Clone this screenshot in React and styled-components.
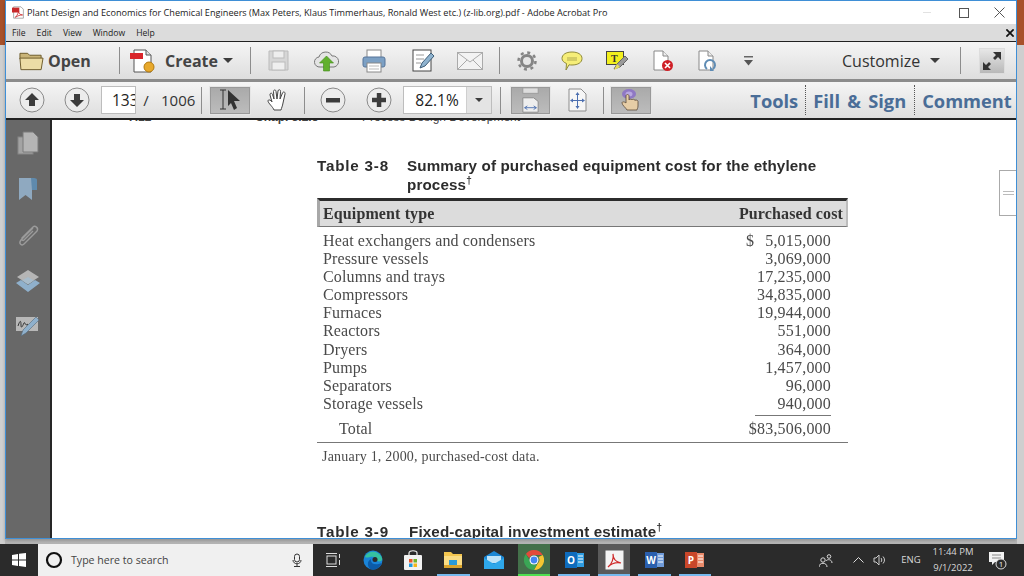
import React from 'react';
import styled, { createGlobalStyle } from 'styled-components';

const Global = createGlobalStyle`
  html, body { margin: 0; padding: 0; width: 1024px; height: 576px; overflow: hidden; }
  body { font-family: "Open Sans", "Noto Sans", sans-serif; background: #c4c4c4; }
  svg { flex: none; display: block; }
`;

const Screen = styled.div`
  width: 1024px;
  height: 576px;
  display: flex;
  flex-direction: column;
  overflow: hidden;
`;
const Desktop = styled.div`
  height: 544px;
  display: flex;
  background: linear-gradient(#c9c9c9 538px, #b4b4b4 544px);
`;
const Strip = styled.div`
  width: ${(p) => p.$w}px;
  flex: none;
  background: linear-gradient(#a8512a 0 45px, #cfcfcf 45px 100%);
`;
const Window = styled.div`
  width: 1012px;
  height: 539px;
  flex: none;
  display: flex;
  flex-direction: column;
  border: 1px solid #3f8fd6;
  box-sizing: border-box;
  background: #fff;
  box-shadow: 1px 0 0 #3f8fd6, 0 2px 3px rgba(0, 0, 0, 0.25);
`;
const TitleBar = styled.div`
  height: 23px;
  flex: none;
  display: flex;
  align-items: center;
  padding-left: 6px;
  background: #fff;
  font-size: 9.13px;
  color: #222;
`;
const TitleText = styled.span`
  margin-left: 2px;
  white-space: nowrap;
`;
const WinButtons = styled.div`
  margin-left: auto;
  display: flex;
  align-items: center;
`;
const WinButton = styled.div`
  width: ${(p) => p.$w}px;
  height: 22px;
  display: flex;
  align-items: center;
  justify-content: center;
`;
const MinimizeDash = styled.div`
  width: 8px;
  height: 1px;
  background: #e2e2e2;
`;
const MenuBar = styled.div`
  height: 17px;
  flex: none;
  display: flex;
  align-items: center;
  gap: 11px;
  padding: 0 2px 0 6px;
  background: #dcdcdc;
  border-bottom: 1px solid #222;
  font-size: 8.6px;
  color: #222;
`;
const MenuClose = styled.div`
  margin-left: auto;
  display: flex;
`;
const Toolbar = styled.div`
  height: ${(p) => p.$h}px;
  flex: none;
  display: flex;
  align-items: center;
  box-sizing: border-box;
  background: linear-gradient(#f5f5f5, #dedede);
  border-bottom: ${(p) => p.$line};
`;
const Slot = styled.div`
  width: ${(p) => p.$w}px;
  flex: none;
  height: 100%;
  display: flex;
  align-items: center;
  justify-content: ${(p) => p.$j || 'center'};
  gap: ${(p) => p.$gap || 0}px;
`;
const Sep = styled.div`
  width: 1px;
  height: ${(p) => p.$h || 27}px;
  flex: none;
  background: ${(p) => p.$c || '#8d8d8d'};
`;
const BigLabel = styled.span`
  font-size: 16px;
  font-weight: 700;
  color: #444;
`;
const PlainLabel = styled.span`
  font-size: ${(p) => p.$size || 16}px;
  color: #333;
`;
const Caret = styled.div`
  width: 0;
  height: 0;
  flex: none;
  border-left: ${(p) => p.$s || 5}px solid transparent;
  border-right: ${(p) => p.$s || 5}px solid transparent;
  border-top: ${(p) => p.$s || 5}px solid #3c3c3c;
`;
const PageInput = styled.div`
  width: ${(p) => p.$w}px;
  height: 28px;
  flex: none;
  box-sizing: border-box;
  border: 1px solid #bdbdbd;
  background: #fff;
  display: flex;
  align-items: center;
  overflow: hidden;
  font-size: 15.5px;
  color: #222;
  padding-left: ${(p) => p.$pad}px;
`;
const ZoomCaret = styled.div`
  margin-left: auto;
  width: 24px;
  height: 100%;
  flex: none;
  background: #e4e4e4;
  border-left: 1px solid #cfcfcf;
  display: flex;
  align-items: center;
  justify-content: center;
`;
const Pressed = styled.div`
  width: ${(p) => p.$w}px;
  height: 29px;
  flex: none;
  box-sizing: border-box;
  background: linear-gradient(#a9a9a9, #bdbdbd);
  border: 1px solid #e6e6e6;
  box-shadow: inset 0 0 0 1px #999;
  display: flex;
  align-items: center;
  justify-content: center;
`;
const PaneLink = styled.span`
  font-size: 18.3px;
  font-weight: 700;
  word-spacing: 2.5px;
  color: #4a6d97;
  white-space: nowrap;
`;
const DotSep = styled.div`
  height: 30px;
  width: 0;
  flex: none;
  border-left: 1px dotted #555;
`;
const Body = styled.div`
  flex: 1;
  min-height: 0;
  display: flex;
`;
const SidePanel = styled.div`
  width: 44px;
  flex: none;
  background: #686868;
  border-right: 2px solid #262626;
  box-shadow: 1px 0 0 #555;
  display: flex;
  flex-direction: column;
  align-items: center;
  padding-top: 11px;
  gap: 22px;
`;
const DocView = styled.div`
  flex: 1;
  position: relative;
  overflow: hidden;
  background: #fff;
`;
const ScrollHandle = styled.div`
  position: absolute;
  right: 0;
  top: 50px;
  width: 17px;
  height: 46px;
  box-sizing: border-box;
  border: 1px solid #aaa;
  border-right: none;
  background: #fff;
  display: flex;
  align-items: center;
  justify-content: center;
  &::after {
    content: '';
    width: 11px;
    height: 2px;
    border-top: 1px solid #bbb;
    border-bottom: 1px solid #bbb;
  }
`;
const ClippedHead = styled.div`
  margin-top: -10px;
  height: 18px;
  display: flex;
  font-family: "Liberation Sans", sans-serif;
  font-size: 12px;
  font-weight: 700;
  color: #444;
  white-space: nowrap;
`;
const HeadPart = styled.span`
  width: ${(p) => p.$w}px;
  flex: none;
  font-weight: ${(p) => p.$weight || 700};
  padding-left: ${(p) => p.$pad || 0}px;
  box-sizing: border-box;
`;
const Sheet = styled.div`
  width: 531px;
  margin-left: 265px;
  padding-top: 28px;
  filter: blur(0.3px);
`;
const Caption = styled.div`
  display: grid;
  grid-template-columns: 90px 1fr;
  font-family: "Liberation Sans", sans-serif;
  font-weight: 700;
  font-size: 15.2px;
  line-height: 19px;
  letter-spacing: 0.13px;
  color: #2c2c2c;
  white-space: nowrap;
`;
const TableNo = styled.span`
  letter-spacing: 0.8px;
`;
const Sup = styled.sup`
  font-size: 10px;
  line-height: 0;
`;
const HeadBand = styled.div`
  margin-top: 4px;
  height: 29px;
  box-sizing: border-box;
  border-top: 3px solid #2c2c2c;
  border-bottom: 1px solid #777;
  border-left: 3px solid #a8a8a8;
  border-right: 2px solid #bdbdbd;
  background: #dcdcdc;
  display: flex;
  align-items: center;
  justify-content: space-between;
  padding: 0 3px;
  font-family: "Liberation Serif", serif;
  font-weight: 700;
  font-size: 16px;
  letter-spacing: 0.12px;
  color: #333;
`;
const Rows = styled.div`
  margin-top: 5px;
  font-family: "Liberation Serif", serif;
  font-size: 16px;
  letter-spacing: 0.13px;
  color: #4a4a4a;
`;
const Row = styled.div`
  height: 18.1px;
  line-height: 18.1px;
  display: flex;
  padding: 0 17px 0 6px;
  white-space: nowrap;
`;
const Amount = styled.span`
  margin-left: auto;
  letter-spacing: 0.2px;
`;
const Dollar = styled.span`
  margin-right: 11px;
`;
const TotalRule = styled.div`
  width: 76px;
  height: 1px;
  margin: 2px 17px 0 auto;
  background: #777;
`;
const TotalRow = styled.div`
  height: 26px;
  box-sizing: border-box;
  line-height: 24px;
  display: flex;
  padding: 0 17px 0 22px;
  border-bottom: 1px solid #777;
  margin-top: 1px;
`;
const Footnote = styled.div`
  margin-top: 6px;
  padding-left: 5px;
  font-family: "Liberation Serif", serif;
  font-size: 14px;
  letter-spacing: 0.2px;
  color: #4a4a4a;
`;
const NextCaption = styled(Caption)`
  margin-top: 57px;
  grid-template-columns: 92px 1fr;
`;
const Taskbar = styled.div`
  height: 32px;
  flex: none;
  display: flex;
  align-items: stretch;
  background: #2b2b2b;
  color: #ddd;
`;
const StartBtn = styled.div`
  width: 38px;
  flex: none;
  display: flex;
  align-items: center;
  justify-content: center;
`;
const SearchBox = styled.div`
  width: 275px;
  flex: none;
  display: flex;
  align-items: center;
  background: #f0f0f0;
  color: #444;
  font-size: 10.6px;
  padding: 0 11px 0 7px;
  box-sizing: border-box;
`;
const SearchText = styled.span`
  margin-left: 8px;
`;
const MicWrap = styled.div`
  margin-left: auto;
  display: flex;
`;
const TaskIcon = styled.div`
  width: ${(p) => p.$w || 40.2}px;
  flex: none;
  display: flex;
  align-items: center;
  justify-content: center;
  box-sizing: border-box;
  position: relative;
  padding: 0 4px;
  background: ${(p) => p.$bg || 'transparent'} content-box;
  &::after {
    content: '';
    position: absolute;
    left: 4px;
    right: 4px;
    bottom: 0;
    height: 2px;
    background: ${(p) => p.$line || 'transparent'};
  }
`;
const Tray = styled.div`
  margin-left: auto;
  margin-right: 5px;
  display: flex;
  align-items: center;
  font-size: 9.5px;
  color: #d8d8d8;
`;
const TraySlot = styled.div`
  width: ${(p) => p.$w}px;
  flex: none;
  display: flex;
  align-items: center;
  justify-content: center;
  text-align: center;
  line-height: 16px;
`;

const Folder = () => (
  <svg width="25" height="22" viewBox="0 0 26 22">
    <path d="M1 3h8l2 2h12v4H1z" fill="#c9b478" stroke="#6b5a2a" />
    <path d="M2 20L1 8h24l-2 12z" fill="#ecdca6" stroke="#6b5a2a" />
  </svg>
);
const CreateIcon = () => (
  <svg width="26" height="24" viewBox="0 0 26 24">
    <path d="M4 1h12l5 5v17H4z" fill="#fff" stroke="#555" />
    <path d="M16 1v5h5" fill="#ddd" stroke="#555" />
    <rect x="0" y="4" width="13" height="6" fill="#d9252a" />
    <circle cx="19" cy="18" r="5" fill="#e8a92c" stroke="#b27a10" />
  </svg>
);
const SaveIcon = () => (
  <svg width="21" height="21" viewBox="0 0 21 21">
    <path d="M1 1h19v19H1z" fill="#d6d6d6" stroke="#bbb" />
    <rect x="5" y="1" width="11" height="7" fill="#eee" stroke="#bbb" />
    <rect x="4" y="12" width="13" height="8" fill="#efefef" stroke="#bbb" />
  </svg>
);
const UploadIcon = () => (
  <svg width="27" height="22" viewBox="0 0 27 22">
    <path d="M7 17a5 5 0 0 1-1-10 7 7 0 0 1 13-1 5.500 5.500 0 0 1 2 11z" fill="#e4e4e4" stroke="#777" />
    <path d="M13.500 6l7 7h-4v8h-6v-8h-4z" fill="#62b02e" stroke="#3f8a1a" strokeWidth=".6" />
  </svg>
);
const PrintIcon = () => (
  <svg width="24" height="24" viewBox="0 0 24 24">
    <rect x="5" y="1" width="14" height="8" fill="#fff" stroke="#888" />
    <rect x="1" y="8" width="22" height="10" rx="2" fill="#7ca0c4" stroke="#56759a" />
    <rect x="5" y="14" width="14" height="9" fill="#fff" stroke="#888" />
    <path d="M7 17h10M7 20h10" stroke="#bbb" />
  </svg>
);
const EditIcon = () => (
  <svg width="24" height="23" viewBox="0 0 24 23">
    <rect x="1" y="1" width="18" height="21" fill="#fff" stroke="#444" />
    <path d="M4 6h8M4 10h8M4 14h5" stroke="#999" />
    <path d="M8 19l2-5 9-10 3 3-9 10z" fill="#8fb3cf" stroke="#3f5e78" />
  </svg>
);
const MailIcon = () => (
  <svg width="26" height="18" viewBox="0 0 26 18">
    <rect x=".5" y=".5" width="25" height="17" fill="#f3f3f3" stroke="#aaa" />
    <path d="M1 1l12 9 12-9M1 17l9-9M25 17l-9-9" fill="none" stroke="#aaa" />
  </svg>
);
const GearIcon = () => (
  <svg width="20" height="20" viewBox="0 0 20 20">
    <circle cx="10" cy="10" r="5.500" fill="#e6e6e6" stroke="#858585" strokeWidth="3" />
    <circle cx="10" cy="10" r="8.500" fill="none" stroke="#858585" strokeWidth="2.500" strokeDasharray="3 3.670" />
  </svg>
);
const CommentIcon = () => (
  <svg width="22" height="20" viewBox="0 0 22 20">
    <path d="M11 1c6 0 10 2.500 10 6.500S17 14 11 14c-1 0-2 0-3-.2L5 19l.5-6.500C3 11.500 1 9.800 1 7.500 1 3.500 5 1 11 1z" fill="#f6ee78" stroke="#8f8a3a" />
    <path d="M6 7h10M6 9h10" stroke="#b0aa50" />
  </svg>
);
const HighlightIcon = () => (
  <svg width="23" height="20" viewBox="0 0 23 20">
    <rect x=".5" y=".5" width="17" height="13" fill="#f2ef1e" stroke="#444" />
    <text x="5" y="11" fontSize="10" fontFamily="Liberation Serif" fontWeight="700" fill="#333">T</text>
    <path d="M8 18l3-5 8-8 3 3-8 8z" fill="#9a9a9a" stroke="#666" />
    <path d="M8 19l3-6 3 3z" fill="#e8dd5a" />
  </svg>
);
const PageX = () => (
  <svg width="21" height="22" viewBox="0 0 21 22">
    <path d="M1 1h9l5 5v14H1z" fill="#fff" stroke="#888" />
    <path d="M10 1v5h5" fill="#eee" stroke="#888" />
    <circle cx="14.500" cy="15.500" r="5.500" fill="#cf2027" />
    <path d="M12 13l5 5M17 13l-5 5" stroke="#fff" strokeWidth="1.600" />
  </svg>
);
const PageRefresh = () => (
  <svg width="19" height="22" viewBox="0 0 19 22">
    <path d="M1 1h9l5 5v14H1z" fill="#fff" stroke="#888" />
    <path d="M10 1v5h5" fill="#eee" stroke="#888" />
    <path d="M9 19a5 5 0 1 1 6 0" fill="none" stroke="#5f8cb4" strokeWidth="2" />
    <path d="M12 16v5h4z" fill="#5f8cb4" />
  </svg>
);
const MoreIcon = () => (
  <svg width="9" height="10" viewBox="0 0 9 10">
    <path d="M0 0h9v1.500H0z" fill="#666" />
    <path d="M0 4h9L4.500 9.500z" fill="#555" />
  </svg>
);
const ExpandBtn = () => (
  <svg width="26" height="26" viewBox="0 0 26 26">
    <defs>
      <linearGradient id="exp" x1="0" y1="0" x2="0" y2="1">
        <stop offset="0" stopColor="#e8e8e8" />
        <stop offset="1" stopColor="#b8b8b8" />
      </linearGradient>
    </defs>
    <rect x=".5" y=".5" width="25" height="25" fill="url(#exp)" stroke="#ddd" />
    <path d="M14 4h8v8l-3-3-3 3-2-2 3-3zM12 22H4v-8l3 3 3-3 2 2-3 3z" fill="#333" />
  </svg>
);
const RoundBtn = ({ kind }) => (
  <svg width="26" height="26" viewBox="0 0 26 26">
    <circle cx="13" cy="13" r="12" fill="#ececec" stroke="#8a8a8a" />
    {kind === 'up' && <path d="M13 6l7 7h-4v6h-6v-6H6z" fill="#3c3c3c" />}
    {kind === 'down' && <path d="M13 20l7-7h-4V7h-6v6H6z" fill="#3c3c3c" />}
    {kind === 'minus' && <rect x="6" y="11" width="14" height="4.500" fill="#3c3c3c" />}
    {kind === 'plus' && <path d="M10.800 6h4.500v4.800H20v4.500h-4.700V20h-4.500v-4.700H6v-4.500h4.800z" fill="#3c3c3c" />}
  </svg>
);
const SelectIcon = () => (
  <svg width="24" height="22" viewBox="0 0 24 22">
    <path d="M2 1h6M2 20h6M5 1v19" stroke="#333" fill="none" />
    <path d="M10 1l12 11h-6l3 7-3 2-3-7-3 3z" fill="#333" />
  </svg>
);
const HandIcon = () => (
  <svg width="22" height="24" viewBox="0 0 22 24">
    <path d="M7 22c-1-3-6-7-6-9s3-1 4 1L3 7c-.5-2 2-2.500 2.500-.5L7 11 6.500 3.500c0-2 2.500-2 2.500 0L10 11l1-8c.3-2 2.800-1.500 2.500.5L13 11l2.500-6c.8-1.800 3-1 2.500 1l-2 9c-.5 3-1.500 5-2 7z" fill="#fff" stroke="#444" />
  </svg>
);
const FitWidth = () => (
  <svg width="19" height="27" viewBox="0 0 19 30">
    <rect x="1" y="1" width="17" height="6" fill="#ddd" stroke="#999" />
    <path d="M1 12h12l5 4v12H1z" fill="#eee" stroke="#888" />
    <path d="M3 23h13M3 23l3-2M3 23l3 2M16 23l-3-2M16 23l-3 2" stroke="#4c6fb0" />
  </svg>
);
const FitPage = () => (
  <svg width="19" height="24" viewBox="0 0 19 24">
    <path d="M1 1h12l5 5v17H1z" fill="#f6f6f6" stroke="#8d8d8d" />
    <path d="M9.500 6v13M4 12.500h11" stroke="#4c6fb0" />
    <path d="M9.500 4l2 3h-4zM9.500 21l2-3h-4zM2 12.500l3-2v4zM17 12.500l-3-2v4z" fill="#4c6fb0" />
  </svg>
);
const TouchIcon = () => (
  <svg width="22" height="24" viewBox="0 0 22 24">
    <ellipse cx="9" cy="6" rx="7" ry="5" fill="#8f78c4" />
    <ellipse cx="9" cy="6" rx="3.500" ry="2.500" fill="#b8a8e0" />
    <path d="M7 22c-1-2-5-5-5-7s3-1 4 0V8c0-2 3-2 3 0v4c0-1 3-1 3 0 0-1 3-1 3 .5 0-1 3-.5 3 1V18c0 2-1 3-1 4z" fill="#e6cda6" stroke="#5a4a38" strokeWidth=".8" />
  </svg>
);
const PdfSmall = () => (
  <svg width="13" height="13" viewBox="0 0 16 16">
    <path d="M2 1h9l3 3v11H2z" fill="#fff" stroke="#999" />
    <rect x="0" y="2" width="9" height="6" fill="#c8282a" />
    <path d="M4 14c3-3 4-6 4-8 0 3 2 5 5 5-3 0-6 1-9 3z" fill="none" stroke="#c8282a" />
  </svg>
);
const SmallX = ({ size = 11, c = '#555', w = 1 }) => (
  <svg width={size} height={size} viewBox="0 0 11 11">
    <path d="M.5.500l10 10M10.500.500l-10 10" stroke={c} strokeWidth={w} />
  </svg>
);

const SidePages = () => (
  <svg width="22" height="24" viewBox="0 0 22 24">
    <rect x="1" y="6" width="15" height="17" fill="#a3a3a3" stroke="#858585" />
    <path d="M6 1h10l5 5v15H6z" fill="#b5b5b5" stroke="#7a7a7a" />
  </svg>
);
const SideBookmark = () => (
  <svg width="20" height="24" viewBox="0 0 20 24">
    <path d="M1 1h13v22l-6.500-5L1 23z" fill="#8fa9c0" />
    <path d="M13 1c3 0 6 0 6 2v10h-5z" fill="#5f8aad" />
  </svg>
);
const SideClip = () => (
  <svg width="24" height="24" viewBox="0 0 24 24">
    <path d="M17 5L5 17c-3 4 1 6 3 4L21 8c2-3-2-6-4-4L6 15c-1 2 1 3 2 2l9-9" fill="none" stroke="#9b9b9b" strokeWidth="1.400" />
  </svg>
);
const SideLayers = () => (
  <svg width="26" height="24" viewBox="0 0 26 24">
    <path d="M13 1l11 7-11 7L2 8z" fill="#b5b5b5" />
    <path d="M6 11l7 5 7-5 5 3-12 9L1 14z" fill="#8fb0cc" />
    <path d="M7 11.500L13 8l6 3.500-6 4z" fill="#a8bccb" />
  </svg>
);
const SideSign = () => (
  <svg width="26" height="22" viewBox="0 0 26 22">
    <rect x="1" y="2" width="22" height="14" fill="#b8b8b8" />
    <path d="M3 11c2-6 3-6 3-1s2 0 3-2 1 4 4 1" fill="none" stroke="#333" />
    <path d="M6 21l2-6 13-13 3 3-13 13z" fill="#8fb0cc" stroke="#55697a" strokeWidth=".6" />
  </svg>
);

const WinLogo = () => (
  <svg width="14" height="14" viewBox="0 0 14 14">
    <path d="M0 2l6-1v5.500H0zM7 .800L14 0v6.500H7zM0 7.500h6V13l-6-1zM7 7.500h7V14l-7-1z" fill="#fff" />
  </svg>
);
const CortanaRing = () => (
  <svg width="18" height="18" viewBox="0 0 18 18">
    <circle cx="9" cy="9" r="7" fill="none" stroke="#111" strokeWidth="2.200" />
  </svg>
);
const Mic = () => (
  <svg width="10" height="14" viewBox="0 0 10 14">
    <rect x="2.500" y="1" width="5" height="8" rx="2.500" fill="none" stroke="#333" />
    <path d="M1 7c0 5 8 5 8 0M5 11v2M2 13.500h6" fill="none" stroke="#333" />
  </svg>
);
const TaskView = () => (
  <svg width="15" height="14" viewBox="0 0 15 14">
    <rect x="1" y="3" width="9" height="8" fill="none" stroke="#ddd" />
    <path d="M0 .500h11M0 13.500h11M13.500 1v4M13.500 7v5" stroke="#ddd" />
  </svg>
);
const Edge = () => (
  <svg width="20" height="20" viewBox="0 0 20 20">
    <circle cx="10" cy="10" r="9.500" fill="#1a84d8" />
    <path d="M2 7c2-6 13-8 17 1 1 3-2 4-5 3 1-3-3-5-7-4-2 .5-4 1-5 0z" fill="#35c1a0" />
    <path d="M7 19c-3-3-3-8 1-10-1 4 3 7 11 4-2 5-7 8-12 6z" fill="#0c5ba8" />
    <circle cx="12" cy="9.500" r="2.500" fill="#2b2b2b" />
  </svg>
);
const Store = () => (
  <svg width="20" height="20" viewBox="0 0 20 20">
    <path d="M6 5V3c0-3 8-3 8 0v2" fill="none" stroke="#eee" strokeWidth="1.200" />
    <rect x="1" y="5" width="18" height="15" rx="1" fill="#f2f2f2" />
    <rect x="6" y="9" width="3.500" height="3.500" fill="#e8552a" />
    <rect x="10.500" y="9" width="3.500" height="3.500" fill="#70b32c" />
    <rect x="6" y="13.500" width="3.500" height="3.500" fill="#1f9ae0" />
    <rect x="10.500" y="13.500" width="3.500" height="3.500" fill="#f4b61a" />
  </svg>
);
const Explorer = () => (
  <svg width="20" height="18" viewBox="0 0 20 18">
    <path d="M1 1h7l2 2h9v14H1z" fill="#f4c64f" />
    <rect x="1" y="5" width="18" height="12" fill="#fbdd84" />
    <rect x="6" y="9" width="8" height="5" fill="#2a9bd8" />
    <rect x="1" y="14" width="18" height="3" fill="#d9a32c" />
  </svg>
);
const MailApp = () => (
  <svg width="20" height="18" viewBox="0 0 20 18">
    <path d="M0 6l10-6 10 6v12H0z" fill="#1c87d4" />
    <path d="M3 5h14v7H3z" fill="#bfe3f7" />
    <path d="M0 7l10 6 10-6v11H0z" fill="#2ea7ea" />
  </svg>
);
const Chrome = () => (
  <svg width="20" height="20" viewBox="0 0 20 20">
    <path d="M10 0a10 10 0 0 1 8.700 5H10a5 5 0 0 0-4.700 3.300L1.900 4A10 10 0 0 1 10 0z" fill="#e24a3b" />
    <path d="M18.700 5A10 10 0 0 1 10 20l3.700-6.500A5 5 0 0 0 14.500 7z" fill="#f5c531" />
    <path d="M1.900 4L6 11.500A5 5 0 0 0 13 14l-3 6A10 10 0 0 1 1.900 4z" fill="#3aa655" />
    <circle cx="10" cy="10" r="4.500" fill="#fff" />
    <circle cx="10" cy="10" r="3.400" fill="#4285f4" />
  </svg>
);
const OfficeTile = ({ bg, side, letter }) => (
  <svg width="19" height="18" viewBox="0 0 19 18">
    <rect x="8" y="2" width="11" height="14" fill={side} />
    <rect x="0" y="1" width="12" height="16" fill={bg} />
    <text x="6" y="13" textAnchor="middle" fontSize="10" fontWeight="700" fontFamily="Open Sans" fill="#fff">{letter}</text>
    <path d="M13 5h5M13 8h5M13 11h5" stroke="#fff" />
  </svg>
);
const AcrobatApp = () => (
  <svg width="19" height="20" viewBox="0 0 19 20">
    <rect x=".5" y=".5" width="18" height="19" fill="#f4f4f4" />
    <path d="M3 17c4-3 6-9 5-13 0 5 3 8 8 9-5-1-10 1-13 4z" fill="none" stroke="#cf2a2a" strokeWidth="1.200" />
  </svg>
);
const People = () => (
  <svg width="14" height="13" viewBox="0 0 14 13">
    <circle cx="4" cy="6" r="2.200" fill="none" stroke="#ddd" />
    <path d="M0 13c0-5 8-5 8 0" fill="none" stroke="#ddd" />
    <circle cx="10" cy="2.500" r="1.800" fill="none" stroke="#ddd" />
    <path d="M7 7c1-2 6-2 6 2" fill="none" stroke="#ddd" />
  </svg>
);
const Chevron = () => (
  <svg width="11" height="6" viewBox="0 0 11 6">
    <path d="M.5 5.500l5-5 5 5" fill="none" stroke="#ddd" />
  </svg>
);
const Speaker = () => (
  <svg width="14" height="12" viewBox="0 0 14 12">
    <path d="M1 4h2l3-3v10L3 8H1z" fill="none" stroke="#ccc" />
    <path d="M8 4c1 1 1 3 0 4M10 2.500c2 2 2 5 0 7" fill="none" stroke="#ccc" />
  </svg>
);
const Notify = () => (
  <svg width="19" height="20" viewBox="0 0 19 20">
    <path d="M1 2h15v10H7l-3 3v-3H1z" fill="#f2f2f2" />
    <path d="M4 5h9M4 8h9" stroke="#888" />
    <circle cx="13" cy="14" r="5" fill="#2b2b2b" stroke="#ddd" />
    <text x="13" y="17" textAnchor="middle" fontSize="8" fill="#eee" fontFamily="Open Sans">1</text>
  </svg>
);

const equipment = [
  ['Heat exchangers and condensers', '5,015,000'],
  ['Pressure vessels', '3,069,000'],
  ['Columns and trays', '17,235,000'],
  ['Compressors', '34,835,000'],
  ['Furnaces', '19,944,000'],
  ['Reactors', '551,000'],
  ['Dryers', '364,000'],
  ['Pumps', '1,457,000'],
  ['Separators', '96,000'],
  ['Storage vessels', '940,000'],
];

export default function App() {
  return (
    <Screen>
      <Global />
      <Desktop>
        <Strip $w={5} />
        <Window>
          <TitleBar>
            <PdfSmall />
            <TitleText>
              Plant Design and Economics for Chemical Engineers (Max Peters, Klaus Timmerhaus, Ronald West etc.) (z-lib.org).pdf - Adobe Acrobat Pro
            </TitleText>
            <WinButtons>
              <WinButton $w={37}><MinimizeDash /></WinButton>
              <WinButton $w={37}>
                <svg width="10" height="10" viewBox="0 0 10 10">
                  <rect x=".5" y=".5" width="9" height="9" fill="none" stroke="#555" />
                </svg>
              </WinButton>
              <WinButton $w={34}>
                <SmallX />
              </WinButton>
            </WinButtons>
          </TitleBar>
          <MenuBar>
            <span>File</span>
            <span>Edit</span>
            <span>View</span>
            <span>Window</span>
            <span>Help</span>
            <MenuClose>
              <SmallX size={8} c="#111" w={2.4} />
            </MenuClose>
          </MenuBar>
          <Toolbar $h={40} $line="3px solid #8c8c8c">
            <Slot $w={13} />
            <Slot $w={74} $gap={4} $j="flex-start">
              <Folder />
              <BigLabel>Open</BigLabel>
            </Slot>
            <Slot $w={26} />
            <Sep />
            <Slot $w={10} />
            <CreateIcon />
            <Slot $w={9} />
            <BigLabel>Create</BigLabel>
            <Slot $w={5} />
            <Caret />
            <Slot $w={17} />
            <Sep />
            <Slot $w={56}><SaveIcon /></Slot>
            <Slot $w={40}><UploadIcon /></Slot>
            <Slot $w={55}><PrintIcon /></Slot>
            <Slot $w={45}><EditIcon /></Slot>
            <Slot $w={47}><MailIcon /></Slot>
            <Slot $w={5} />
            <Sep />
            <Slot $w={55}><GearIcon /></Slot>
            <Slot $w={35}><CommentIcon /></Slot>
            <Slot $w={56}><HighlightIcon /></Slot>
            <Slot $w={36}><PageX /></Slot>
            <Slot $w={52}><PageRefresh /></Slot>
            <Slot $w={30}><MoreIcon /></Slot>
            <Slot $w={78} />
            <PlainLabel>Customize</PlainLabel>
            <Slot $w={10} />
            <Caret />
            <Slot $w={20} />
            <Sep />
            <Slot $w={18} />
            <ExpandBtn />
          </Toolbar>
          <Toolbar $h={38} $line="2px solid #222">
            <Slot $w={13} />
            <RoundBtn kind="up" />
            <Slot $w={19} />
            <RoundBtn kind="down" />
            <Slot $w={11} />
            <PageInput $w={35} $pad={10}>133</PageInput>
            <Slot $w={20}>
              <PlainLabel $size={15}>/</PlainLabel>
            </Slot>
            <Slot $w={5} />
            <PlainLabel $size={15}>1006</PlainLabel>
            <Slot $w={6} />
            <Sep />
            <Slot $w={7} />
            <Pressed $w={42}><SelectIcon /></Pressed>
            <Slot $w={53}><HandIcon /></Slot>
            <Sep />
            <Slot $w={15} />
            <RoundBtn kind="minus" />
            <Slot $w={20} />
            <RoundBtn kind="plus" />
            <Slot $w={11} />
            <PageInput $w={89} $pad={11}>
              82.1%
              <ZoomCaret><Caret $s={4} /></ZoomCaret>
            </PageInput>
            <Slot $w={8} />
            <Sep />
            <Slot $w={9} />
            <Pressed $w={41}><FitWidth /></Pressed>
            <Slot $w={52}><FitPage /></Slot>
            <Sep />
            <Slot $w={6} />
            <Pressed $w={42}><TouchIcon /></Pressed>
            <Slot $w={98} />
            <PaneLink>Tools</PaneLink>
            <Slot $w={7} />
            <DotSep />
            <Slot $w={7} />
            <PaneLink>Fill &amp; Sign</PaneLink>
            <Slot $w={8} />
            <DotSep />
            <Slot $w={7} />
            <PaneLink>Comment</PaneLink>
          </Toolbar>
          <Body>
            <SidePanel>
              <SidePages />
              <SideBookmark />
              <SideClip />
              <SideLayers />
              <SideSign />
            </SidePanel>
            <DocView>
              <ClippedHead>
                <HeadPart $w={203} $pad={76}>7.12</HeadPart>
                <HeadPart $w={107}>Chap. 3.2.5</HeadPart>
                <HeadPart $w={200} $weight={400}>Process Design Development</HeadPart>
              </ClippedHead>
              <Sheet>
                <Caption>
                  <TableNo>Table 3-8</TableNo>
                  <span>
                    Summary of purchased equipment cost for the ethylene
                    <br />
                    process<Sup>†</Sup>
                  </span>
                </Caption>
                <HeadBand>
                  <span>Equipment type</span>
                  <span>Purchased cost</span>
                </HeadBand>
                <Rows>
                  {equipment.map(([name, cost], i) => (
                    <Row key={name}>
                      <span>{name}</span>
                      <Amount>{i === 0 && <Dollar>$</Dollar>}{cost}</Amount>
                    </Row>
                  ))}
                  <TotalRule />
                  <TotalRow>
                    <span>Total</span>
                    <Amount>$83,506,000</Amount>
                  </TotalRow>
                </Rows>
                <Footnote>January 1, 2000, purchased-cost data.</Footnote>
                <NextCaption>
                  <TableNo>Table 3-9</TableNo>
                  <span>Fixed-capital investment estimate<Sup>†</Sup></span>
                </NextCaption>
              </Sheet>
              <ScrollHandle />
            </DocView>
          </Body>
        </Window>
        <Strip $w={7} />
      </Desktop>
      <Taskbar>
        <StartBtn><WinLogo /></StartBtn>
        <SearchBox>
          <CortanaRing />
          <SearchText>Type here to search</SearchText>
          <MicWrap><Mic /></MicWrap>
        </SearchBox>
        <TaskIcon $w={40}><TaskView /></TaskIcon>
        <TaskIcon><Edge /></TaskIcon>
        <TaskIcon><Store /></TaskIcon>
        <TaskIcon $line="#76b9ed"><Explorer /></TaskIcon>
        <TaskIcon><MailApp /></TaskIcon>
        <TaskIcon $bg="#44704a" $line="#4fe04f"><Chrome /></TaskIcon>
        <TaskIcon $line="#76b9ed"><OfficeTile bg="#0f6cbd" side="#2e9be0" letter="O" /></TaskIcon>
        <TaskIcon $bg="#5a5a5a" $line="#76b9ed"><AcrobatApp /></TaskIcon>
        <TaskIcon $line="#76b9ed"><OfficeTile bg="#2b5fae" side="#6f9ad8" letter="W" /></TaskIcon>
        <TaskIcon $line="#76b9ed"><OfficeTile bg="#c9472a" side="#e98a6a" letter="P" /></TaskIcon>
        <Tray>
          <TraySlot $w={42}><People /></TraySlot>
          <TraySlot $w={22}><Chevron /></TraySlot>
          <TraySlot $w={22}><Speaker /></TraySlot>
          <TraySlot $w={40}>ENG</TraySlot>
          <TraySlot $w={44}>11:44 PM<br />9/1/2022</TraySlot>
          <TraySlot $w={44}><Notify /></TraySlot>
        </Tray>
      </Taskbar>
    </Screen>
  );
}
